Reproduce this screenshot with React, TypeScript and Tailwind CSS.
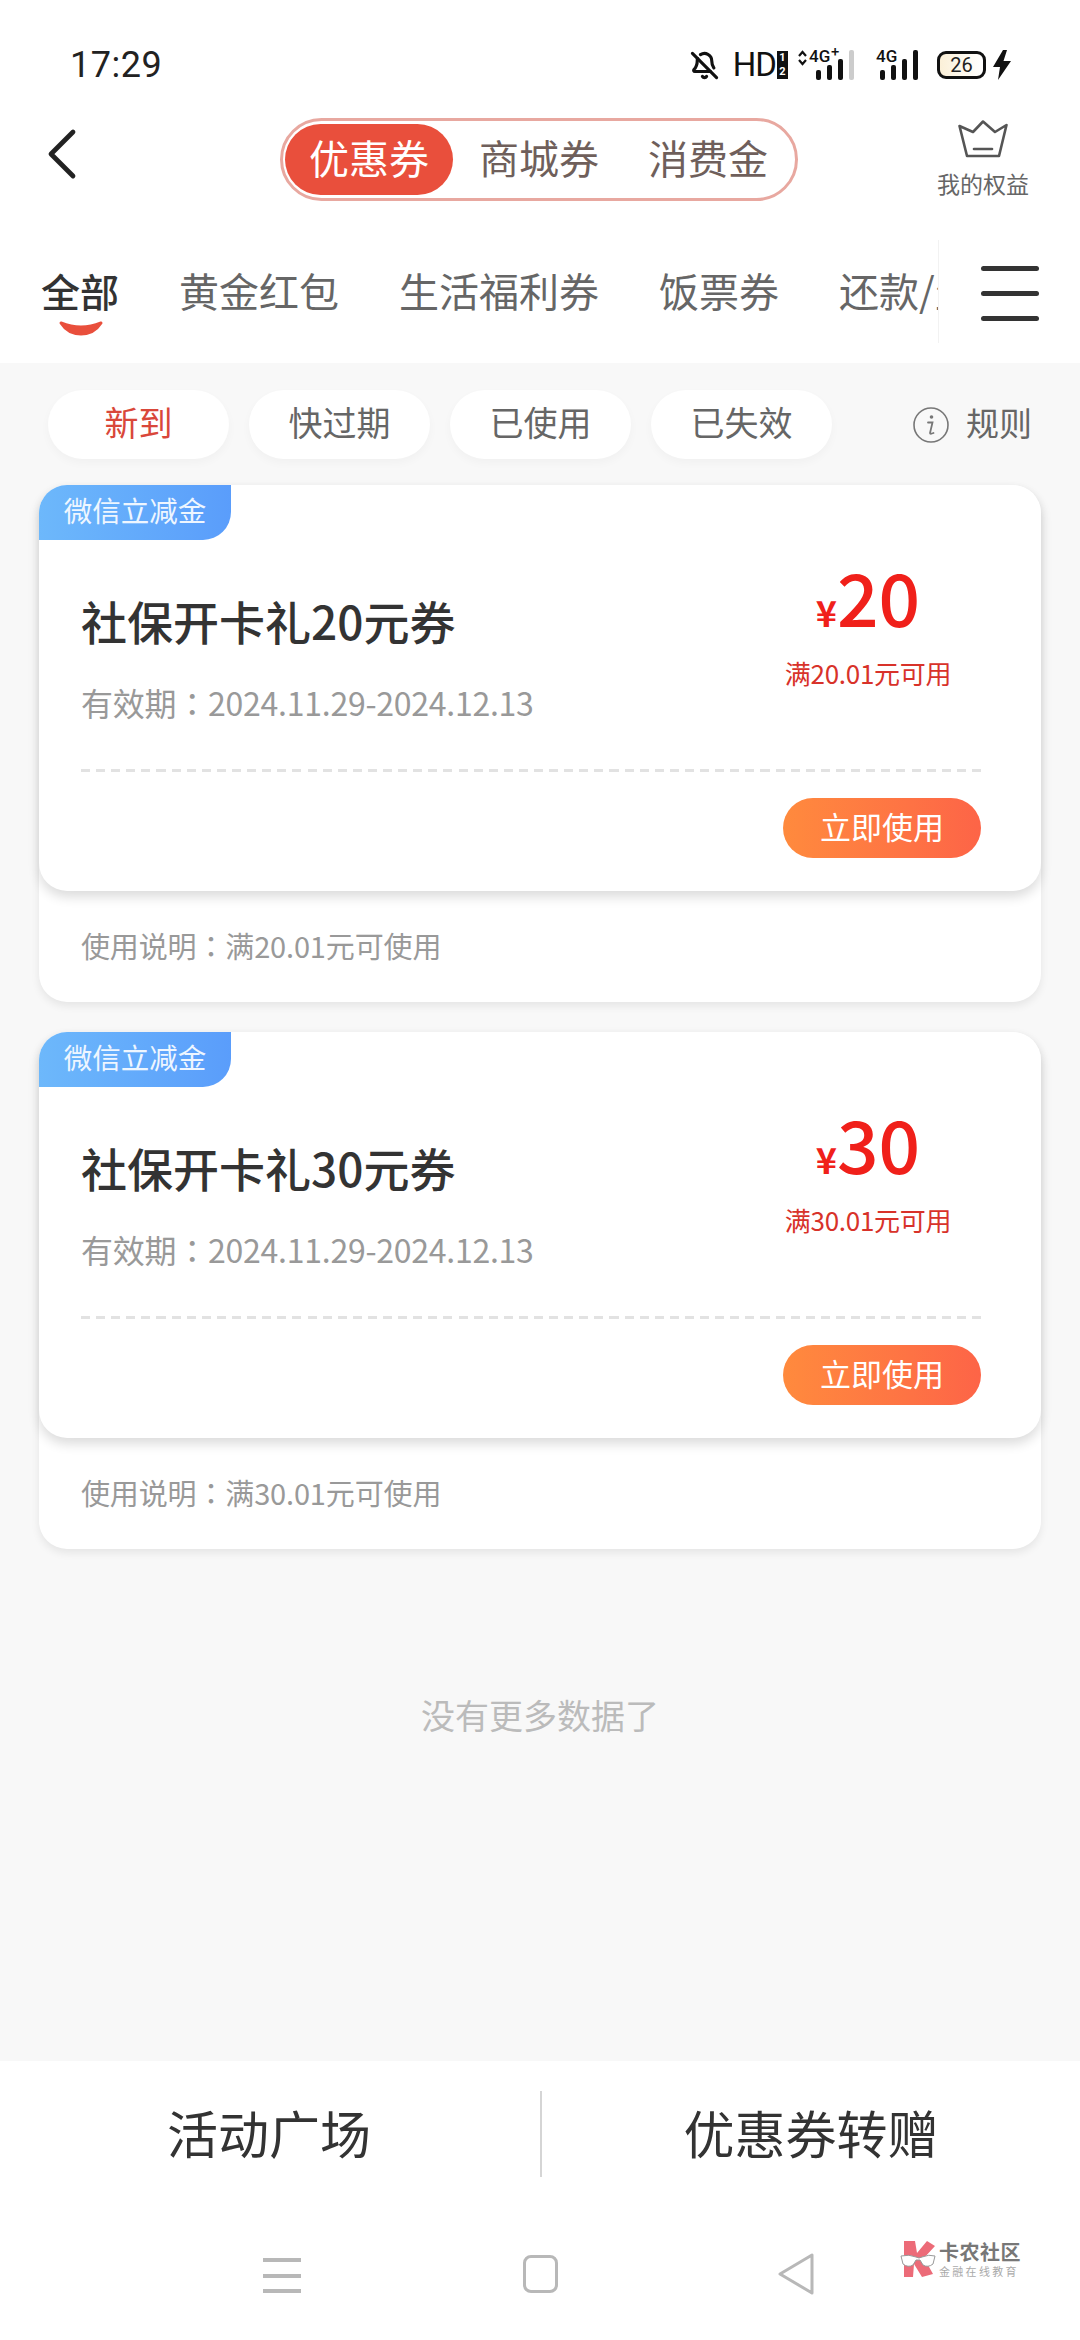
import React from 'react';
import { BellOff, ChevronLeft } from 'lucide-react';

const cjk = '[font-family:"Noto_Sans_CJK_SC","Noto_Sans",sans-serif]';

const topTabs = ['黄金红包', '生活福利券', '饭票券'];
const filters = ['新到', '快过期', '已使用', '已失效'];

// the reference has a centred full-width colon, which the TC face draws
const Colon: React.FC = () => <span className='font-["Noto_Sans_CJK_TC",sans-serif]'>：</span>;

const SignalBars: React.FC<{ dim?: boolean }> = ({ dim }) => (
  <svg width="38" height="30" viewBox="0 0 38 30" className="block">
    <rect x="0" y="20" width="5" height="10" rx="2" fill="#111" />
    <rect x="11" y="15" width="5" height="15" rx="2" fill="#111" />
    <rect x="22" y="9" width="5" height="21" rx="2" fill="#111" />
    <rect x="33" y="0" width="5" height="30" rx="2" fill={dim ? '#ccc' : '#111'} />
  </svg>
);

const StatusBar: React.FC = () => (
  <div className="flex h-[105px] items-end justify-between pb-[18px] pl-[70px] pr-[68px]">
    <span className="text-[36px] leading-[44px] tracking-[0.5px] text-[#222] font-['Roboto',sans-serif]">17:29</span>
    <div className="flex items-center pb-[7px]">
      <BellOff size={29} strokeWidth={2.6} className="text-[#111]" />
      <span className="ml-[14px] text-[33px] leading-[30px] text-[#111] font-['Roboto',sans-serif] tracking-[-1px]">HD</span>
      <div className="ml-[1px] flex h-[28px] w-[11px] flex-col justify-between bg-[#111] text-center text-[11px] font-bold leading-[14px] text-white font-['Roboto',sans-serif]">
        <span>1</span>
        <span>2</span>
      </div>
      <div className="relative ml-[10px] h-[30px] w-[56px]">
        <svg width="9" height="16" viewBox="0 0 9 16" className="absolute left-0 top-[0px]">
          <path d="M1 6 L4.5 2 L8 6 M1 10 L4.5 14 L8 10" fill="none" stroke="#111" strokeWidth="2.2" />
        </svg>
        <span className="absolute left-[11px] top-[-3px] text-[17px] font-medium leading-[18px] text-[#111] font-['Roboto',sans-serif]">4G</span>
        <span className="absolute left-[33px] top-[-6px] text-[14px] font-bold leading-[14px] text-[#111]">+</span>
        <div className="absolute bottom-0 right-0">
          <SignalBars dim />
        </div>
      </div>
      <div className="relative ml-[22px] h-[30px] w-[42px]">
        <span className="absolute left-0 top-[-3px] text-[17px] font-medium leading-[18px] text-[#111] font-['Roboto',sans-serif]">4G</span>
        <div className="absolute bottom-0 right-0">
          <SignalBars />
        </div>
      </div>
      <div className="ml-[19px] flex h-[28px] w-[49px] items-center justify-center rounded-[9px] border-[3px] border-[#111] bg-gradient-to-r from-[#fbf0d8] to-white text-[20px] leading-none text-[#222] font-['Roboto',sans-serif]">
        26
      </div>
      <svg width="20" height="30" viewBox="0 0 20 30" className="ml-[6px] block">
        <path d="M11 0 L1 17 H8 L6 30 L19 11 H11.5 L15 0 Z" fill="#111" />
      </svg>
    </div>
  </div>
);

const Header: React.FC = () => (
  <div className="flex h-[103px] items-start pl-[18px]">
    <ChevronLeft size={88} strokeWidth={1.3} className="mt-[5px] shrink-0 text-[#222]" />
    <div className="ml-[174px] mt-[13px] flex h-[83px] w-[518px] items-center rounded-full border-[3px] border-[#e8a8a0] bg-white pl-[2px]">
      <div className="flex h-[71px] w-[168px] items-center justify-center rounded-full bg-[#e94f3c] pb-[6px] text-[40px] leading-none text-white">优惠券</div>
      <div className="ml-[12px] w-[148px] pb-[6px] text-center text-[40px] leading-none text-[#6f5f5b]">商城券</div>
      <div className="ml-[21px] w-[148px] pb-[6px] text-center text-[40px] leading-none text-[#6f5f5b]">消费金</div>
    </div>
    <div className="ml-[136px] mt-[15px] flex w-[98px] flex-col items-center">
      <svg width="50" height="38" viewBox="0 0 50 38" fill="none" stroke="#555" strokeWidth="2.6" strokeLinejoin="round" strokeLinecap="round">
        <path d="M1.5 6 L15 12 L25 1.5 L37 12 L48.5 5 L41 36 H9 Z" />
        <path d="M16 29 H34" />
      </svg>
      <span className="mt-[11px] text-[23px] leading-[28px] text-[#666]">我的权益</span>
    </div>
  </div>
);

const CategoryTabs: React.FC = () => (
  <div className="flex h-[155px] items-start">
    <div className="flex h-[135px] w-[938px] items-start overflow-hidden pl-[41px] pt-[55px]">
      <div className="relative shrink-0 text-[39px] font-medium leading-[54px] text-[#333]">
        全部
        <svg width="46" height="17" viewBox="0 0 46 17" className="absolute left-[17px] top-[57px]">
          <path d="M3 3 Q23 11 43 3 Q36 14 23 14 Q10 14 3 3 Z" fill="#e94f3c" stroke="#e94f3c" strokeWidth="3" strokeLinejoin="round" />
        </svg>
      </div>
      {topTabs.map((t) => (
        <span key={t} className="ml-[60px] shrink-0 text-[40px] leading-[54px] text-[#666]">{t}</span>
      ))}
      <span className="ml-[60px] shrink-0 text-[40px] leading-[54px] text-[#666]">还款/生活</span>
    </div>
    <div className="mt-[32px] flex h-[103px] w-[142px] flex-col items-center justify-center gap-[20px] border-l border-[#f2f2f2] pt-[4px]">
      <div className="h-[5px] w-[58px] rounded-full bg-[#333]" />
      <div className="h-[5px] w-[58px] rounded-full bg-[#333]" />
      <div className="h-[5px] w-[58px] rounded-full bg-[#333]" />
    </div>
  </div>
);

const FilterRow: React.FC = () => (
  <div className="flex h-[122px] items-start pl-[48px] pt-[27px]">
    {filters.map((f, i) => (
      <div
        key={f}
        className={`mr-[20px] flex h-[69px] w-[181px] items-center justify-center rounded-[35px] bg-white pb-[5px] text-[34px] leading-none shadow-[0_4px_10px_rgba(0,0,0,0.03)] ${i === 0 ? 'text-[#d9473a]' : 'text-[#666]'}`}
      >
        {f}
      </div>
    ))}
    <div className="ml-[60px] flex h-[69px] items-center">
      <svg width="38" height="38" viewBox="0 0 38 38" fill="none">
        <circle cx="19" cy="19" r="17" stroke="#777" strokeWidth="1.6" />
        <circle cx="19.5" cy="11" r="1.8" fill="#777" />
        <path d="M16 16.5 H20.5 L18 27 Q18 28.5 21.5 27" stroke="#777" strokeWidth="1.8" strokeLinecap="round" />
      </svg>
      <span className="ml-[16px] pb-[5px] text-[33px] leading-none text-[#666]">规则</span>
    </div>
  </div>
);

const Coupon: React.FC<{ amount: string; min: string }> = ({ amount, min }) => (
  <div className="mx-[39px] rounded-[28px] bg-white shadow-[0_4px_8px_rgba(0,0,0,0.08)]">
    <div className="relative h-[406px] rounded-[28px] bg-white shadow-[0_6px_12px_rgba(0,0,0,0.14)]">
      <div className="absolute left-0 top-0 flex h-[55px] w-[192px] items-center justify-center rounded-br-[28px] rounded-tl-[28px] bg-gradient-to-r from-[#6db8fb] to-[#5a9dfb] pb-[5px] text-[28.5px] leading-none text-[#eef6ff]">
        微信立减金
      </div>
      <div className="flex h-[284px] justify-between pl-[42px] pr-[81px] pt-[70px]">
        <div className="pt-[35px]">
          <div className="text-[46px] font-medium leading-[60px] text-[#333]">社保开卡礼{amount}元券</div>
          <div className="mt-[30px] text-[32px] leading-[44px] tracking-[-0.25px] text-[#999]">有效期<Colon />2024.11.29-2024.12.13</div>
        </div>
        <div className="flex w-[184px] flex-col items-center">
          <div className="flex h-[80px] items-baseline font-medium text-[#f0201a]">
            <span className="text-[36px] font-bold leading-none">¥</span>
            <span className="text-[73px] leading-[80px]">{amount}</span>
          </div>
          <div className="mt-[20px] text-[26px] leading-[36px] tracking-[-0.3px] text-[#d8322a]">满{min}元可用</div>
        </div>
      </div>
      <div className="ml-[42px] mr-[60px] h-[3px] bg-[repeating-linear-gradient(90deg,#e2e2e2_0,#e2e2e2_9px,transparent_9px,transparent_15.1px)]" />
      <div className="mt-[26px] flex justify-end pr-[60px]">
        <div className="flex h-[60px] w-[198px] items-center justify-center rounded-full bg-gradient-to-r from-[#ff8a3d] to-[#fd6447] pb-[5px] text-[31px] leading-none text-white">
          立即使用
        </div>
      </div>
    </div>
    <div className="flex h-[111px] items-center pb-[3px] pl-[42px] text-[29px] leading-none tracking-[-0.15px] text-[#999]">使用说明<Colon />满{min}元可使用</div>
  </div>
);

const BottomBar: React.FC = () => (
  <div className="bg-white">
    <div className="flex h-[150px] items-center pb-[4px]">
      <div className="flex-1 pb-[4px] pr-[2px] text-center text-[51px] leading-none text-[#333]">活动广场</div>
      <div className="h-[86px] w-[2px] bg-[#d5d5d5]" />
      <div className="flex-1 pb-[4px] text-center text-[51px] leading-none text-[#333]">优惠券转赠</div>
    </div>
    <div className="relative flex h-[129px] items-start pl-[263px] pt-[46px]">
      <div className="flex h-[36px] w-[38px] flex-col justify-between pt-[1px]">
        <div className="h-[4px] bg-[#b8b8b8]" />
        <div className="h-[4px] bg-[#b8b8b8]" />
        <div className="h-[4px] bg-[#b8b8b8]" />
      </div>
      <div className="ml-[222px] mt-[-2px] h-[38px] w-[35px] rounded-[8px] border-[3px] border-[#b8b8b8]" />
      <svg width="38" height="44" viewBox="0 0 38 44" fill="none" className="ml-[219px] mt-[-5px]">
        <path d="M35 3 V41 L3 22 Z" stroke="#b8b8b8" strokeWidth="3" strokeLinejoin="round" />
      </svg>
      <div className="absolute left-[900px] top-[29px] flex items-center">
        <svg width="36" height="38" viewBox="0 0 36 38" className="block">
          <path d="M4 1 H15 L17 13 L27 1 L35 6 L24 18 L33 34 L22 37 L14 24 L13 37 H4 Z" fill="#ec6b78" />
          <path d="M1 16 Q9 14 16 17 Q19 19 22 17 Q29 14 35 16 L33 24 Q28 28 23 25 L20 20 H16 L13 25 Q8 28 3 24 Z" fill="#fff" stroke="#999" strokeWidth="1" />
        </svg>
        <div className="ml-[3px] flex flex-col">
          <span className="text-[20px] font-bold leading-[24px] tracking-[0.5px] text-[#777]">卡农社区</span>
          <span className="text-[11px] leading-[14px] tracking-[2.3px] text-[#aaa]">金融在线教育</span>
        </div>
      </div>
    </div>
  </div>
);

export default function App() {
  return (
    <div className={`flex h-[2340px] w-[1080px] flex-col overflow-hidden bg-white ${cjk}`}>
      <StatusBar />
      <Header />
      <CategoryTabs />
      <div className="flex flex-1 flex-col bg-[#f8f8f8]">
        <FilterRow />
        <div className="flex flex-col gap-[30px]">
          <Coupon amount="20" min="20.01" />
          <Coupon amount="30" min="30.01" />
        </div>
        <div className="mt-[142px] text-center text-[34px] leading-[48px] text-[#bbb]">没有更多数据了</div>
      </div>
      <BottomBar />
    </div>
  );
}
